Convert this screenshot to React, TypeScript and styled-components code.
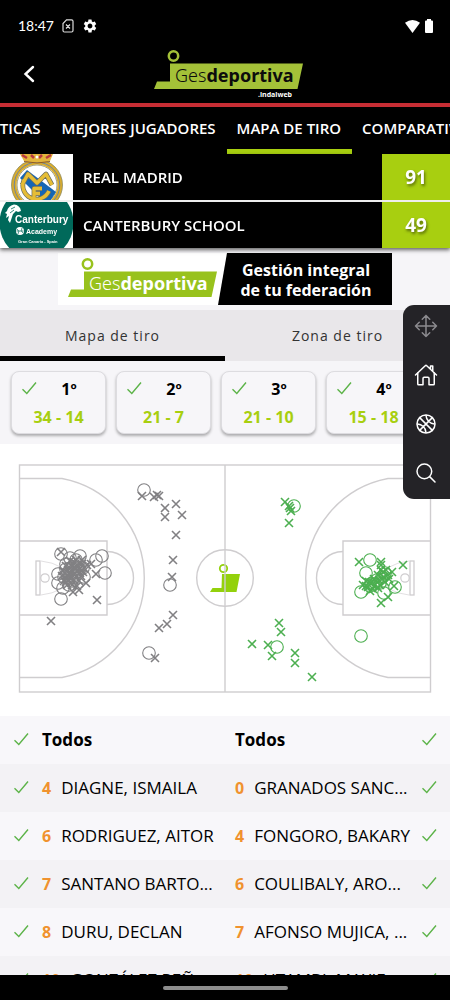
import React, { useLayoutEffect, useRef, useState } from 'react';
import styled, { createGlobalStyle } from 'styled-components';
import { IoBasketballOutline, IoHomeOutline, IoMoveOutline, IoSearchOutline } from 'react-icons/io5';
import { MdSettings } from 'react-icons/md';

const GlobalStyle = createGlobalStyle`
  *, *::before, *::after { box-sizing: border-box; }
  body {
    margin: 0;
    background: #000;
    font-family: 'Open Sans', 'Noto Sans', sans-serif;
    color: #000;
  }
  button { font: inherit; color: inherit; border: 0; background: none; padding: 0; cursor: pointer; }
  svg { display: block; }
`;

const lime = '#a8cf10';
const checkGreen = '#5cb348';

const Screen = styled.div`
  position: relative;
  display: flex;
  flex-direction: column;
  height: 100vh;
  background: #fff;
  overflow: hidden;
`;

const StatusBar = styled.div`
  flex: none;
  display: flex;
  align-items: center;
  gap: 8px;
  height: 46px;
  padding: 6px 17px 0 18px;
  background: #000;
  color: #fff;
`;

const Clock = styled.time`
  font: 400 14px/20px Lato, sans-serif;
`;

const StatusRight = styled.div`
  display: flex;
  align-items: center;
  gap: 5px;
  margin-left: auto;
`;

const Header = styled.header`
  flex: none;
  display: grid;
  grid-template-columns: 1fr auto 1fr;
  align-items: center;
  height: 61px;
  padding: 0 9px 2px 17px;
  background: #000;
  border-bottom: 4px solid #c62d34;
`;

const BackButton = styled.button`
  display: grid;
  place-items: center;
  width: 24px;
  height: 32px;
`;

const TabStrip = styled.nav`
  flex: none;
  display: flex;
  height: 47px;
  background: #000;
  overflow-x: auto;
  scrollbar-width: none;
`;

const Tab = styled.button<{ $active?: boolean }>`
  flex: none;
  padding: 0 11px 0 10px;
  color: #fff;
  font-weight: 600;
  font-size: 15px;
  line-height: 20px;
  border-bottom: 5px solid ${(p) => (p.$active ? lime : 'transparent')};
`;

const Scoreboard = styled.section`
  flex: none;
  position: relative;
  background: #000;
  box-shadow: 0 2px 4px rgba(0, 0, 0, 0.6);
`;

const TeamRow = styled.div`
  display: flex;
  height: 46px;
  color: #fff;
  & + & {
    height: 48px;
    border-top: 2px solid #eee;
  }
`;

const Crest = styled.div`
  flex: none;
  width: 73px;
  background: #fff;
`;

const TeamName = styled.span`
  flex: 1;
  align-self: center;
  padding-left: 10px;
  font-weight: 600;
  font-size: 15px;
  line-height: 20px;
`;

const Score = styled.strong`
  display: grid;
  place-items: center;
  width: 68px;
  background: ${lime};
  font-size: 19px;
  line-height: 24px;
  text-shadow: 1px 2px 3px rgba(0, 0, 0, 0.5);
`;

const BannerArea = styled.div`
  flex: none;
  display: flex;
  justify-content: center;
  padding: 5px 0;
  background: #f6f5f8;
`;

const Banner = styled.a`
  display: flex;
  width: 334px;
  height: 52px;
  background: #fff;
  text-decoration: none;
`;

const BannerLogo = styled.div`
  flex: none;
  width: 160px;
  padding: 4px 0 0 10px;
`;

const BannerText = styled.span`
  flex: 1;
  display: grid;
  place-items: center;
  padding: 2px 0 0 2px;
  background: #000;
  color: #fff;
  clip-path: polygon(9px 0, 100% 0, 100% 100%, 0 100%);
  font-weight: 700;
  font-size: 16px;
  line-height: 20px;
  text-align: center;
`;

const SubTabs = styled.nav`
  flex: none;
  display: flex;
  background: #e9e7ea;
`;

const SubTab = styled.button<{ $active?: boolean }>`
  flex: 1;
  height: 51px;
  padding-top: 6px;
  color: #333;
  font-size: 14px;
  line-height: 20px;
  letter-spacing: 1px;
  border-bottom: 5px solid ${(p) => (p.$active ? '#000' : 'transparent')};
`;

const Periods = styled.section`
  flex: none;
  display: flex;
  gap: 10px;
  padding: 10px 10px 10px 11px;
  background: #f6f5f8;
  overflow: hidden;
`;

const PeriodCard = styled.label`
  flex: none;
  width: 95px;
  height: 63px;
  padding: 5px 4px 0 10px;
  border: 1px solid #dddce0;
  border-radius: 8px;
  background: #f7f6f9;
  box-shadow: 0 2px 3px rgba(0, 0, 0, 0.3);
  cursor: pointer;
`;

const PeriodTop = styled.span`
  display: flex;
  align-items: center;
`;

const PeriodTitle = styled.strong`
  flex: 1;
  text-align: center;
  font-size: 16px;
  line-height: 24px;
`;

const PeriodScore = styled.strong`
  display: block;
  padding-right: 6px;
  margin-top: 4px;
  text-align: center;
  color: ${lime};
  font-size: 16px;
  line-height: 24px;
`;

const CheckBox = styled.span`
  flex: none;
  display: grid;
  width: 15px;
  height: 17px;
  & > * { grid-area: 1 / 1; }
  & input { appearance: none; width: 100%; height: 100%; margin: 0; cursor: pointer; }
  & svg { pointer-events: none; visibility: hidden; }
  & input:checked + svg { visibility: visible; }
`;

const CourtArea = styled.section`
  flex: none;
  padding: 19px 18px 23px;
  background: #fff;
  & svg { width: 100%; height: auto; }
`;

const Rosters = styled.section`
  flex: 1;
  min-height: 0;
  display: grid;
  grid-template-columns: 1fr 1fr;
  align-items: start;
  overflow-y: auto;
  scrollbar-width: none;
`;

const Roster = styled.ul`
  margin: 0;
  padding: 0;
  list-style: none;
  min-width: 0;
`;

const RosterItem = styled.li`
  background: #f8f7fa;
  &:nth-child(even) { background: #f3f2f5; }
`;

const PlayerRow = styled.label<{ $away: boolean }>`
  display: flex;
  flex-direction: ${(p) => (p.$away ? 'row-reverse' : 'row')};
  align-items: center;
  gap: 13px;
  height: 48px;
  padding: ${(p) => (p.$away ? '0 13px 0 10px' : '0 10px 0 14px')};
  cursor: pointer;
`;

const Player = styled.span`
  flex: 1;
  display: flex;
  align-items: center;
  gap: 10px;
  min-width: 0;
  white-space: nowrap;
  font-size: 17px;
  line-height: 24px;
`;

const Dorsal = styled.b`
  color: #f0922e;
  font-size: 16px;
`;

const FloatingBar = styled.aside`
  position: absolute;
  top: 305px;
  right: 0;
  display: flex;
  flex-direction: column;
  gap: 25px;
  padding: 9px 12px 14px 11px;
  border-radius: 11px 0 0 11px;
  background: #242327;
`;

const ToolButton = styled.button<{ $muted?: boolean }>`
  color: ${(p) => (p.$muted ? '#8b8a8e' : '#fff')};
  width: 24px;
  height: 24px;
`;

const NavBar = styled.footer`
  flex: none;
  display: flex;
  justify-content: center;
  align-items: center;
  height: 25px;
  background: #000;
`;

const HomePill = styled.span`
  width: 125px;
  height: 4px;
  border-radius: 2px;
  background: #8d8d8d;
`;

function Check() {
  return (
    <CheckBox>
      <input type="checkbox" defaultChecked />
      <svg width="15" height="15" viewBox="0 0 15 15" fill="none" stroke={checkGreen} strokeWidth="1.4">
        <path d="M.5 8.2 4.8 12.4 14 1.5" />
      </svg>
    </CheckBox>
  );
}

type LogoProps = { green: string; ink: string; credit?: boolean };

function Logo({ green, ink, credit }: LogoProps) {
  return (
    <svg width="150" height={credit ? 50 : 42} viewBox={credit ? '0 0 150 50' : '0 0 150 42'} role="img" aria-label="Gesdeportiva">
      <circle cx="19.500" cy="7" r="4.700" fill="none" stroke={green} strokeWidth="2.500" />
      <path d="M16 14.500H149L143.500 40H0L3 32.500H16Z" fill={green} />
      <text x="21" y="33" fill={ink} fontFamily="'Noto Sans', sans-serif" fontSize="18">
        <tspan fontWeight="300">Ges</tspan>
        <tspan fontWeight="700">deportiva</tspan>
      </text>
      {credit && (
        <text x="138" y="48" textAnchor="end" fill="#fff" fontFamily="'Open Sans', sans-serif" fontWeight="700" fontSize="7">
          .indalweb
        </text>
      )}
    </svg>
  );
}

const monogram = 'M22 31 28 20 37 29 46 20 52 31M49 37A13 13 0 1 1 24 26M34 45V34.500H42M34 39.500H40';

function MadridCrest() {
  return (
    <svg width="73" height="46" viewBox="0 0 73 46" role="img" aria-label="Real Madrid">
      <circle cx="37" cy="31" r="23" fill="#fff" stroke="#d9ac2c" strokeWidth="5" />
      <circle cx="37" cy="31" r="25.500" fill="none" stroke="#8d8a62" strokeWidth=".8" />
      <circle cx="37" cy="31" r="22.800" fill="none" stroke="#6f86a0" strokeWidth="1" />
      <circle cx="37" cy="31" r="20" fill="none" stroke="#8d8a62" strokeWidth=".8" />
      <path d="M20 24 27 16 56 38 50 47H43Z" fill="#1566b4" />
      <g fill="none" strokeLinejoin="round">
        <path d={monogram} stroke="#6b6f60" strokeWidth="4.800" />
        <path d={monogram} stroke="#e6bd35" strokeWidth="3.400" />
      </g>
      <path d="M20 0H53L50 7Q37 10 24 7Z" fill="#e3b53c" />
      <path d="M24 7.500Q37 10.500 50 7.500" fill="none" stroke="#8b5a2a" strokeWidth="1" />
      <path d="M22 1 27 4M31 1 34 4M39 4 42 1M46 4 51 1" stroke="#b8393f" strokeWidth="2.500" />
      <circle cx="37" cy="3" r="1.500" fill="#fff" />
    </svg>
  );
}

function CanterburyCrest() {
  return (
    <svg width="73" height="46" viewBox="0 0 73 46" role="img" aria-label="Canterbury Academy">
      <circle cx="36.500" cy="21" r="37" fill="#00695a" />
      <path d="M7 9Q8 4 14 2.500 20 3 21 9L18 10 16 9 13 12 12 15 10 21 8 18 9 14 6 16 7 12 5 11Z" fill="#fff" />
      <path d="M11 7 15 5M10 11 14 8" stroke="#00695a" strokeWidth=".8" />
      <g fill="#fff" fontFamily="'Liberation Sans Narrow', 'Liberation Sans', sans-serif" fontWeight="700">
        <text x="15" y="21" fontSize="10">Canterbury</text>
        <text x="26" y="32" fontSize="7">Academy</text>
        <text x="18" y="41" fontSize="4">Gran Canaria - Spain</text>
      </g>
      <circle cx="20" cy="29" r="4" fill="#fff" />
      <path d="M17 27Q20 29 18 32M22 26Q20 29 23 31M16.500 29H23.500" stroke="#00695a" strokeWidth=".7" fill="none" />
    </svg>
  );
}

type Point = [number, number];

const homeMissed: Point[] = [
  [142, 496], [154, 497], [157, 495], [159, 496], [165, 508], [165, 517], [176, 504], [182, 515], [176, 535],
  [173, 560], [172, 577], [173, 615], [167, 624], [159, 628], [155, 658], [51, 621], [97, 600], [61, 552],
  [96, 574], [73, 592], [79, 590], [91, 564], [87, 565], [84, 568], [86, 583], [70, 561], [74, 562], [79, 563],
  [66, 566], [72, 566], [77, 567], [82, 564], [63, 571], [68, 570], [73, 571], [78, 571], [83, 572], [62, 576],
  [67, 575], [71, 576], [76, 576], [81, 576], [64, 581], [69, 580], [74, 580], [79, 581], [67, 585], [72, 585],
  [77, 586], [65, 573], [70, 573], [75, 568], [70, 578], [82, 560], [66, 578], [74, 574], [69, 567], [76, 560],
  [80, 568], [66, 582], [71, 583], [80, 573],
];
const homeMade: Point[] = [
  [144, 490], [170, 585], [149, 653], [61, 599], [105, 573], [102, 556], [96, 560], [61, 554], [80, 556], [70, 558],
  [58, 574], [58, 583], [63, 588], [84, 577], [66, 564], [72, 567], [78, 565], [83, 568], [68, 573], [75, 575],
  [64, 577], [72, 581], [79, 571], [69, 585], [76, 560], [66, 569],
];
const awayMissed: Point[] = [
  [285, 502], [289, 506], [290, 508], [291, 511], [289, 523], [279, 623], [281, 632], [252, 644], [268, 645],
  [272, 656], [295, 653], [295, 663], [312, 677], [359, 562], [381, 562], [381, 565], [403, 565], [392, 572],
  [388, 597], [381, 603], [394, 586], [363, 585], [366, 581], [368, 587], [371, 583], [370, 591], [374, 579],
  [375, 585], [373, 589], [378, 575], [379, 580], [380, 585], [378, 588], [383, 572], [384, 577], [385, 582],
  [388, 575], [389, 579], [386, 570], [381, 570], [366, 586], [376, 581], [382, 579], [369, 582],
];
const awayMade: Point[] = [
  [294, 506], [277, 647], [361, 636], [370, 560], [366, 573], [361, 592], [395, 587], [384, 593], [385, 573],
  [370, 586], [377, 580], [382, 577], [374, 584], [380, 583],
];

type ShotsProps = { missed: Point[]; made: Point[]; color: string };

function Shots({ missed, made, color }: ShotsProps) {
  return (
    <g fill="none" stroke={color}>
      {missed.map(([x, y], i) => (
        <path key={i} d={`M${x - 4} ${y - 4}l8 8m0-8l-8 8`} strokeWidth="1.600" />
      ))}
      {made.map(([x, y], i) => (
        <circle key={i} cx={x} cy={y} r="6.300" strokeWidth="1.100" />
      ))}
    </g>
  );
}

function HalfCourt() {
  return (
    <g>
      <path d="M20 478.500H62A101.300 101.300 0 0 1 62 677.500H20" />
      <path d="M20 541H107V615H20" />
      <path d="M107 551.500A26.500 26.500 0 0 1 107 604.500" />
      <path d="M41 561Q66 564 67 578 66 592 41 595" stroke="#e2e0e2" strokeWidth="1" />
      <rect x="36" y="561" width="4" height="34" strokeWidth="1.300" />
      <circle cx="45" cy="578" r="4.200" strokeWidth="1.200" />
    </g>
  );
}

function Court() {
  return (
    <svg viewBox="18 463 414 230" role="img" aria-label="Mapa de tiro">
      <path d="M222 574H240L236.500 592H210L212.500 588H221.500Z" fill="#93d10c" />
      <circle cx="223.500" cy="568.500" r="3.700" fill="none" stroke="#93d10c" strokeWidth="1.800" />
      <g fill="none" stroke="#cfcdcf" strokeWidth="1.400">
        <rect x="19.500" y="465" width="411" height="227" />
        <path d="M225 465V692" />
        <circle cx="225" cy="578" r="28.300" />
        <HalfCourt />
        <g transform="translate(450 0) scale(-1 1)">
          <HalfCourt />
        </g>
      </g>
      <Shots missed={homeMissed} made={homeMade} color="#818083" />
      <Shots missed={awayMissed} made={awayMade} color="#4caf50" />
    </svg>
  );
}

const periods = [
  { name: '1º', score: '34 - 14' },
  { name: '2º', score: '21 - 7' },
  { name: '3º', score: '21 - 10' },
  { name: '4º', score: '15 - 18' },
];

type PlayerData = { number: string; name: string };

const homePlayers: PlayerData[] = [
  { number: '4', name: 'DIAGNE, ISMAILA' },
  { number: '6', name: 'RODRIGUEZ, AITOR' },
  { number: '7', name: 'SANTANO BARTO...' },
  { number: '8', name: 'DURU, DECLAN' },
  { number: '10', name: 'GONZÁLEZ PEÑ...' },
];
const awayPlayers: PlayerData[] = [
  { number: '0', name: 'GRANADOS SANC...' },
  { number: '4', name: 'FONGORO, BAKARY' },
  { number: '6', name: 'COULIBALY, ARO...' },
  { number: '7', name: 'AFONSO MUJICA, ...' },
  { number: '10', name: 'UTAMBI, MAXIE' },
];

type TeamRosterProps = { players: PlayerData[]; away?: boolean };

function TeamRoster({ players, away = false }: TeamRosterProps) {
  return (
    <Roster>
      <RosterItem>
        <PlayerRow $away={away}>
          <Check />
          <Player><b>Todos</b></Player>
        </PlayerRow>
      </RosterItem>
      {players.map((p) => (
        <RosterItem key={p.number}>
          <PlayerRow $away={away}>
            <Check />
            <Player>
              <Dorsal>{p.number}</Dorsal>
              <span>{p.name}</span>
            </Player>
          </PlayerRow>
        </RosterItem>
      ))}
    </Roster>
  );
}

const tabs = ['ESTADÍSTICAS', 'MEJORES JUGADORES', 'MAPA DE TIRO', 'COMPARATIVA'];

export default function App() {
  const [tab, setTab] = useState('MAPA DE TIRO');
  const [view, setView] = useState('Mapa de tiro');
  const strip = useRef<HTMLElement>(null);

  useLayoutEffect(() => {
    const active = strip.current?.querySelector<HTMLElement>('[aria-current="page"]');
    if (strip.current && active) strip.current.scrollLeft = active.offsetLeft - strip.current.clientWidth / 2 - 2;
  }, []);

  return (
    <>
      <GlobalStyle />
      <Screen>
        <StatusBar>
          <Clock>18:47</Clock>
          <svg width="12" height="14" viewBox="0 0 12 14" fill="none" stroke="#ddd" strokeWidth="1.200">
            <path d="M4.500.8H9.500Q11 .8 11 2.300V11.500Q11 13 9.500 13H2.500Q1 13 1 11.500V4.500ZM4 5.500 8 9.500M8 5.500 4 9.500" />
          </svg>
          <MdSettings size={16} />
          <StatusRight>
            <svg width="15" height="13" viewBox="0 0 15 13" fill="#fff">
              <path d="M0 2.800Q7.500-2.800 15 2.800L7.500 13Z" />
            </svg>
            <svg width="8" height="14" viewBox="0 0 8 14" fill="#fff">
              <path d="M2 0H6V1.500H7Q8 1.500 8 2.500V13Q8 14 7 14H1Q0 14 0 13V2.500Q0 1.500 1 1.500H2Z" />
            </svg>
          </StatusRight>
        </StatusBar>

        <Header>
          <BackButton aria-label="Volver">
            <svg width="12" height="18" viewBox="0 0 12 18" fill="none" stroke="#fff" strokeWidth="2.400" strokeLinecap="round">
              <path d="M10 2 2.500 9 10 16" />
            </svg>
          </BackButton>
          <Logo green="#a4c138" ink="#0c0c0c" credit />
        </Header>

        <TabStrip ref={strip}>
          {tabs.map((t) => (
            <Tab key={t} $active={t === tab} aria-current={t === tab ? 'page' : undefined} onClick={() => setTab(t)}>
              {t}
            </Tab>
          ))}
        </TabStrip>

        <Scoreboard>
          <TeamRow>
            <Crest><MadridCrest /></Crest>
            <TeamName>REAL MADRID</TeamName>
            <Score>91</Score>
          </TeamRow>
          <TeamRow>
            <Crest><CanterburyCrest /></Crest>
            <TeamName>CANTERBURY SCHOOL</TeamName>
            <Score>49</Score>
          </TeamRow>
        </Scoreboard>

        <BannerArea>
          <Banner href="#gesdeportiva">
            <BannerLogo><Logo green="#98c21d" ink="#fff" /></BannerLogo>
            <BannerText>Gestión integral<br />de tu federación</BannerText>
          </Banner>
        </BannerArea>

        <SubTabs>
          {['Mapa de tiro', 'Zona de tiro'].map((v) => (
            <SubTab key={v} $active={v === view} onClick={() => setView(v)}>{v}</SubTab>
          ))}
        </SubTabs>

        <Periods>
          {periods.map((p) => (
            <PeriodCard key={p.name}>
              <PeriodTop>
                <Check />
                <PeriodTitle>{p.name}</PeriodTitle>
              </PeriodTop>
              <PeriodScore>{p.score}</PeriodScore>
            </PeriodCard>
          ))}
        </Periods>

        <CourtArea>
          <Court />
        </CourtArea>

        <Rosters>
          <TeamRoster players={homePlayers} />
          <TeamRoster players={awayPlayers} away />
        </Rosters>

        <NavBar><HomePill /></NavBar>

        <FloatingBar>
          <ToolButton aria-label="Mover" $muted><IoMoveOutline size={24} /></ToolButton>
          <ToolButton aria-label="Inicio"><IoHomeOutline size={24} /></ToolButton>
          <ToolButton aria-label="Partidos"><IoBasketballOutline size={24} /></ToolButton>
          <ToolButton aria-label="Buscar"><IoSearchOutline size={24} /></ToolButton>
        </FloatingBar>
      </Screen>
    </>
  );
}
